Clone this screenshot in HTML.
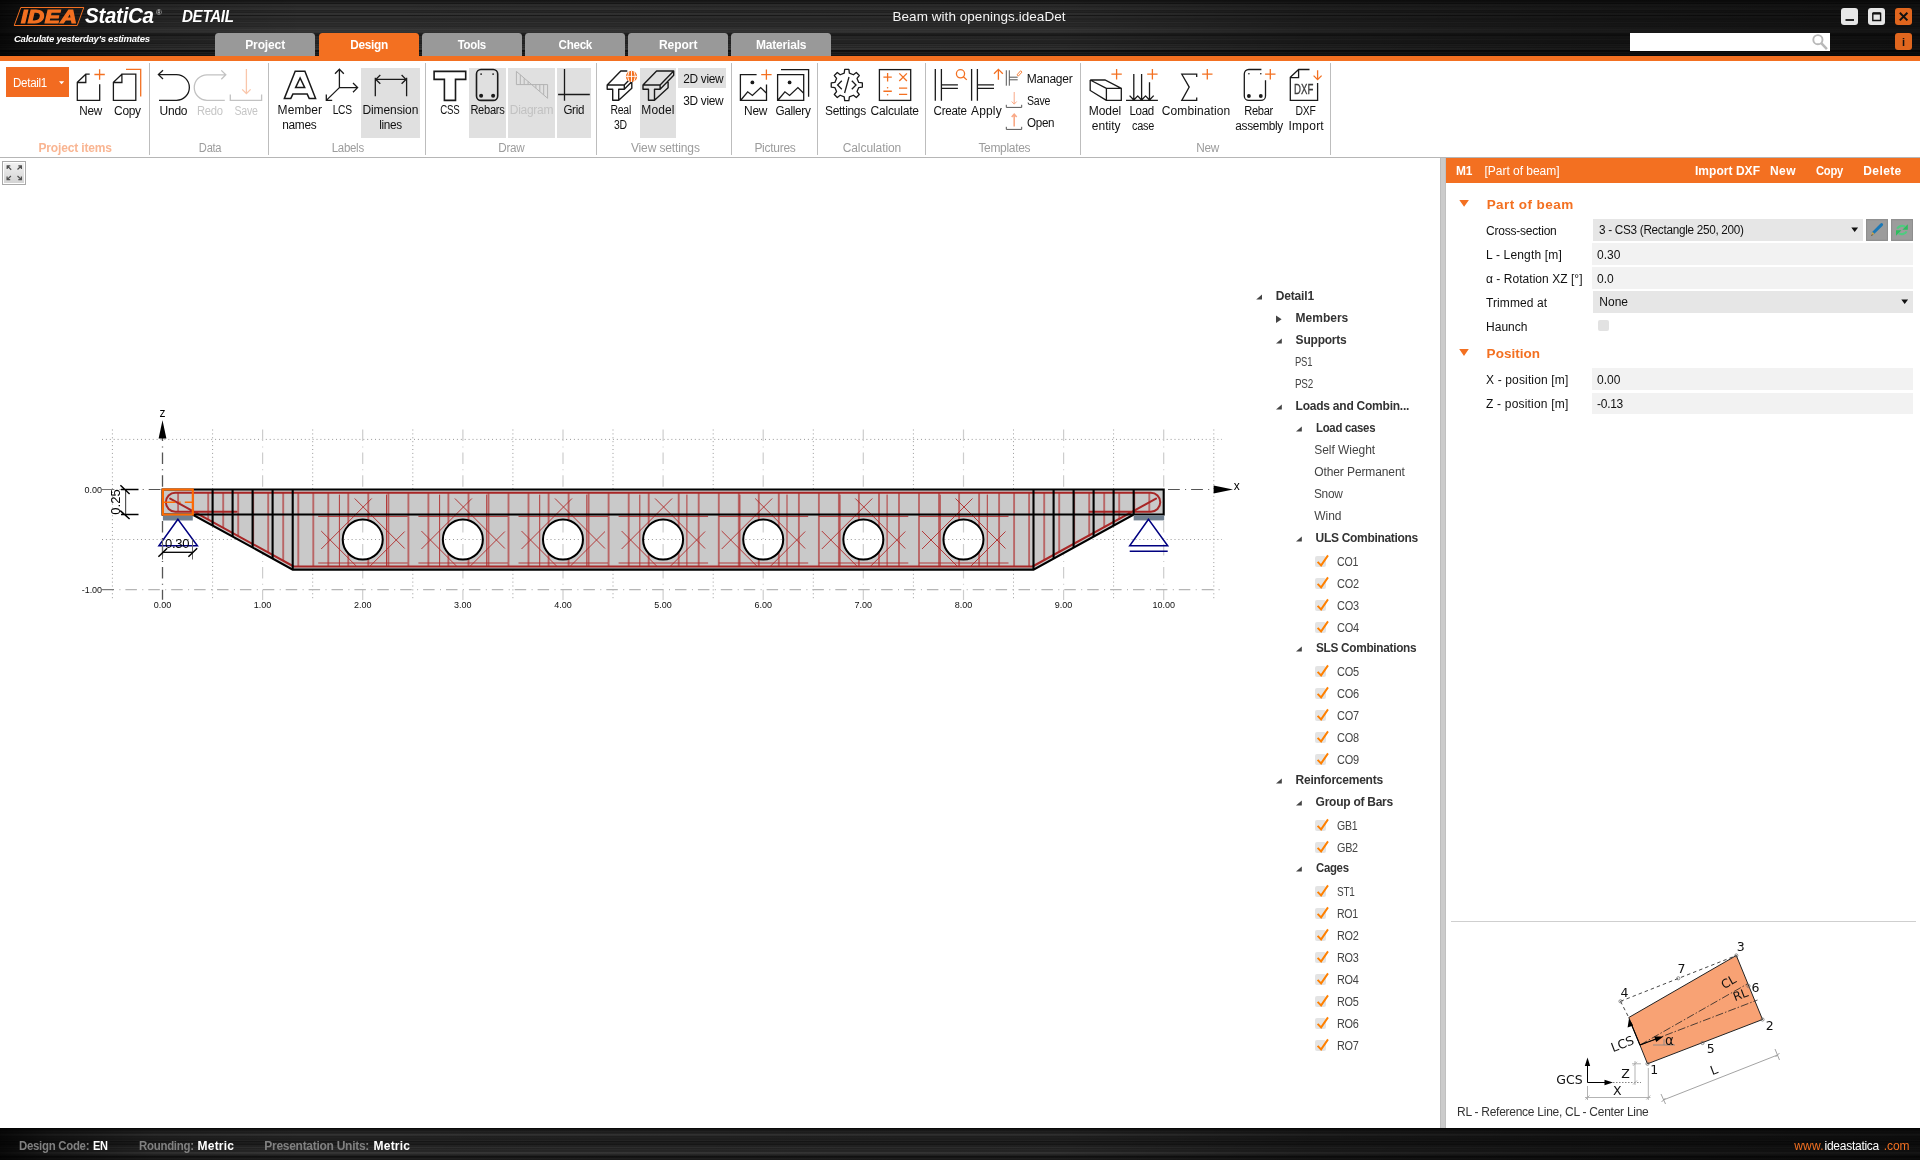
<!DOCTYPE html>
<html><head><meta charset="utf-8"><title>IDEA StatiCa Detail</title>
<style>
html,body{margin:0;padding:0;}
body{width:1920px;height:1160px;overflow:hidden;background:#fff;font-family:"Liberation Sans",sans-serif;font-size:12px;position:relative;}
.t{position:absolute;white-space:pre;}
.a{position:absolute;}
.brush{background-color:#161616;background-image:linear-gradient(90deg,rgba(0,0,0,.8) 0%,rgba(0,0,0,.5) 2.5%,rgba(0,0,0,.15) 8%,rgba(0,0,0,0) 16%,rgba(0,0,0,.08) 55%,rgba(0,0,0,.35) 68%,rgba(0,0,0,.5) 82%,rgba(0,0,0,.62) 100%),linear-gradient(180deg,#161616 0px,#161616 1px,#191919 1px,#191919 2px,#212121 2px,#212121 3px,#171717 3px,#171717 4px,#2c2c2c 4px,#2c2c2c 5px,#2d2d2d 5px,#2d2d2d 6px,#252525 6px,#252525 7px,#2c2c2c 7px,#2c2c2c 8px,#2e2e2e 8px,#2e2e2e 9px,#323232 9px,#323232 10px,#232323 10px,#232323 11px,#272727 11px,#272727 12px,#222222 12px,#222222 13px,#323232 13px,#323232 14px,#303030 14px,#303030 15px,#191919 15px,#191919 16px,#2e2e2e 16px,#2e2e2e 17px,#2e2e2e 17px,#2e2e2e 18px,#272727 18px,#272727 19px,#262626 19px,#262626 20px,#2a2a2a 20px,#2a2a2a 21px,#272727 21px,#272727 22px,#323232 22px,#323232 23px,#282828 23px,#282828 24px,#2b2b2b 24px,#2b2b2b 25px,#2c2c2c 25px,#2c2c2c 26px,#272727 26px,#272727 27px,#313131 27px,#313131 28px,#303030 28px,#303030 29px,#393939 29px,#393939 30px,#323232 30px,#323232 31px,#353535 31px,#353535 32px,#313131 32px,#313131 33px,#212121 33px,#212121 34px,#1d1d1d 34px,#1d1d1d 35px,#191919 35px,#191919 36px,#282828 36px,#282828 37px,#282828 37px,#282828 38px,#252525 38px,#252525 39px,#2e2e2e 39px,#2e2e2e 40px,#252525 40px,#252525 41px,#242424 41px,#242424 42px,#252525 42px,#252525 43px,#202020 43px,#202020 44px,#2f2f2f 44px,#2f2f2f 45px,#272727 45px,#272727 46px,#313131 46px,#313131 47px,#272727 47px,#272727 48px,#343434 48px,#343434 49px,#313131 49px,#313131 50px,#0d0d0d 50px,#0d0d0d 51px,#111111 51px,#111111 52px,#212121 52px,#212121 53px,#171717 53px,#171717 54px,#222222 54px,#222222 55px,#151515 55px,#151515 56px);}
.brush2{background-color:#161616;background-image:linear-gradient(90deg,rgba(0,0,0,.8) 0%,rgba(0,0,0,.5) 2.5%,rgba(0,0,0,.15) 8%,rgba(0,0,0,0) 16%,rgba(0,0,0,.08) 55%,rgba(0,0,0,.35) 68%,rgba(0,0,0,.5) 82%,rgba(0,0,0,.62) 100%),linear-gradient(180deg,#0a0a0a 0px,#0a0a0a 1px,#161616 1px,#161616 2px,#1a1a1a 2px,#1a1a1a 3px,#222222 3px,#222222 4px,#1e1e1e 4px,#1e1e1e 5px,#242424 5px,#242424 6px,#323232 6px,#323232 7px,#2d2d2d 7px,#2d2d2d 8px,#1f1f1f 8px,#1f1f1f 9px,#222222 9px,#222222 10px,#1f1f1f 10px,#1f1f1f 11px,#1e1e1e 11px,#1e1e1e 12px,#242424 12px,#242424 13px,#161616 13px,#161616 14px,#1f1f1f 14px,#1f1f1f 15px,#1c1c1c 15px,#1c1c1c 16px,#171717 16px,#171717 17px,#232323 17px,#232323 18px,#232323 18px,#232323 19px,#2f2f2f 19px,#2f2f2f 20px,#232323 20px,#232323 21px,#2a2a2a 21px,#2a2a2a 22px,#252525 22px,#252525 23px,#262626 23px,#262626 24px,#363636 24px,#363636 25px,#323232 25px,#323232 26px,#272727 26px,#272727 27px,#202020 27px,#202020 28px,#111111 28px,#111111 29px,#151515 29px,#151515 30px,#1f1f1f 30px,#1f1f1f 31px,#1b1b1b 31px,#1b1b1b 32px,#0f0f0f 32px,#0f0f0f 33px);}
svg{position:absolute;overflow:visible;}
.ic{fill:none;stroke:#1a1a1a;stroke-width:1.3;}
.io{fill:none;stroke:#F37021;stroke-width:1.3;}
.ig{fill:none;stroke:#bdbdbd;stroke-width:1.3;}
</style></head><body><div style="position:absolute;left:0;top:0;width:1920px;height:1160px;will-change:transform;">
<div class="a brush" style="left:0;top:0;width:1920px;height:56px;"></div>
<div class="a" style="left:0;top:56px;width:1920px;height:4.5px;background:#F37021;"></div>
<div class="a" style="left:17px;top:6.5px;width:62px;height:17px;border:1.9px solid #F37021;transform:skewX(-20deg);border-radius:1px;"></div>
<span class="t" style="left:21px;top:5px;font-size:19px;line-height:23px;font-weight:700;font-style:italic;color:#F37021;-webkit-text-stroke:1.1px #F37021;letter-spacing:0.4px;transform-origin:0 50%;transform:scaleX(1.2);">IDEA</span>
<span class="t" style="left:85.00px;top:3px;font-size:21.5px;line-height:26px;color:#fff;font-weight:700;font-style:italic;letter-spacing:-0.300px;transform-origin:0 50%;transform:scaleX(0.9546);">StatiCa</span>
<span class="t" style="left:156.00px;top:7px;font-size:8px;line-height:11px;color:#ddd;">®</span>
<span class="t" style="left:182.00px;top:7px;font-size:16px;line-height:19px;color:#fff;font-weight:700;font-style:italic;letter-spacing:-0.300px;transform-origin:0 50%;transform:scaleX(0.9438);">DETAIL</span>
<span class="t" style="left:14.00px;top:32px;font-size:9.5px;line-height:13px;color:#fff;font-weight:700;font-style:italic;letter-spacing:-0.242px;">Calculate yesterday&#x27;s estimates</span>
<span class="t" style="left:892.50px;top:8px;font-size:13.5px;line-height:17px;color:#f4f4f4;letter-spacing:0.046px;">Beam with openings.ideaDet</span>
<div class="a" style="left:215.0px;top:33px;width:100px;height:23px;background:#999999;border-radius:3.5px 3.5px 0 0;"></div>
<span class="t" style="left:245.20px;top:37px;font-size:12px;line-height:16px;color:#fff;font-weight:700;letter-spacing:-0.115px;">Project</span>
<div class="a" style="left:319.0px;top:33px;width:100px;height:23px;background:#F37021;border-radius:3.5px 3.5px 0 0;"></div>
<span class="t" style="left:349.94px;top:37px;font-size:12px;line-height:16px;color:#fff;font-weight:700;letter-spacing:-0.300px;transform-origin:50% 50%;transform:scaleX(0.9866);">Design</span>
<div class="a" style="left:422.0px;top:33px;width:100px;height:23px;background:#999999;border-radius:3.5px 3.5px 0 0;"></div>
<span class="t" style="left:457.25px;top:37px;font-size:12px;line-height:16px;color:#fff;font-weight:700;letter-spacing:-0.300px;transform-origin:50% 50%;transform:scaleX(0.9529);">Tools</span>
<div class="a" style="left:525.0px;top:33px;width:100px;height:23px;background:#999999;border-radius:3.5px 3.5px 0 0;"></div>
<span class="t" style="left:557.78px;top:37px;font-size:12px;line-height:16px;color:#fff;font-weight:700;letter-spacing:-0.300px;transform-origin:50% 50%;transform:scaleX(0.9704);">Check</span>
<div class="a" style="left:628.0px;top:33px;width:100px;height:23px;background:#999999;border-radius:3.5px 3.5px 0 0;"></div>
<span class="t" style="left:658.95px;top:37px;font-size:12px;line-height:16px;color:#fff;font-weight:700;letter-spacing:-0.034px;">Report</span>
<div class="a" style="left:731.0px;top:33px;width:100px;height:23px;background:#999999;border-radius:3.5px 3.5px 0 0;"></div>
<span class="t" style="left:755.90px;top:37px;font-size:12px;line-height:16px;color:#fff;font-weight:700;letter-spacing:-0.179px;">Materials</span>
<div class="a" style="left:1841px;top:8px;width:17px;height:17px;background:#e6e6e6;border-radius:3px;"></div>
<div class="a" style="left:1868px;top:8px;width:17px;height:17px;background:#e6e6e6;border-radius:3px;"></div>
<div class="a" style="left:1895px;top:8px;width:17px;height:17px;background:#E0661E;border-radius:3px;"></div>
<svg style="left:1841px;top:8px" width="17" height="17"><path d="M4.5 12h8.5" stroke="#111" stroke-width="1.8" fill="none"/></svg>
<svg style="left:1868px;top:8px" width="17" height="17"><path d="M4.8 5.5h7.8v7h-7.8z" stroke="#111" stroke-width="1.4" fill="none"/><path d="M4.8 5.3h7.8" stroke="#111" stroke-width="2.2"/></svg>
<svg style="left:1895px;top:8px" width="17" height="17"><path d="M4.8 4.8l7.6 7.6M12.4 4.8l-7.6 7.6" stroke="#111" stroke-width="2" fill="none"/></svg>
<div class="a" style="left:1630px;top:33px;width:200px;height:17.5px;background:#fff;"></div>
<svg style="left:1811px;top:33px" width="20" height="18"><circle cx="6.9" cy="6.7" r="4.6" stroke="#b8b8b8" stroke-width="1.9" fill="none"/><path d="M10.3 10.2l5.6 6" stroke="#b8b8b8" stroke-width="2.5"/></svg>
<div class="a" style="left:1895px;top:33px;width:17px;height:17px;background:#E0661E;border-radius:3px;"></div>
<span class="t" style="left:1902.07px;top:35px;font-size:11px;line-height:14px;color:#111;font-weight:700;">i</span>
<div class="a" style="left:149.0px;top:63px;width:1px;height:92px;background:#bdbdbd;"></div>
<div class="a" style="left:268.0px;top:63px;width:1px;height:92px;background:#bdbdbd;"></div>
<div class="a" style="left:425.0px;top:63px;width:1px;height:92px;background:#bdbdbd;"></div>
<div class="a" style="left:596.0px;top:63px;width:1px;height:92px;background:#bdbdbd;"></div>
<div class="a" style="left:731.0px;top:63px;width:1px;height:92px;background:#bdbdbd;"></div>
<div class="a" style="left:817.0px;top:63px;width:1px;height:92px;background:#bdbdbd;"></div>
<div class="a" style="left:925.0px;top:63px;width:1px;height:92px;background:#bdbdbd;"></div>
<div class="a" style="left:1080.0px;top:63px;width:1px;height:92px;background:#bdbdbd;"></div>
<div class="a" style="left:1330.0px;top:63px;width:1px;height:92px;background:#bdbdbd;"></div>
<div class="a" style="left:0;top:157px;width:1920px;height:1px;background:#b6b6b6;"></div>
<div class="a" style="left:361.2px;top:68px;width:58.80000000000001px;height:70px;background:#e0e0e0;"></div>
<div class="a" style="left:469px;top:68px;width:37px;height:70px;background:#e0e0e0;"></div>
<div class="a" style="left:508px;top:68px;width:47px;height:70px;background:#e0e0e0;"></div>
<div class="a" style="left:557px;top:68px;width:34px;height:70px;background:#e0e0e0;"></div>
<div class="a" style="left:640px;top:68px;width:36px;height:70px;background:#e0e0e0;"></div>
<div class="a" style="left:678px;top:68px;width:48px;height:20px;background:#e0e0e0;"></div>
<div class="a" style="left:6px;top:67px;width:63px;height:30px;background:#F26B21;"></div>
<span class="t" style="left:12.70px;top:75px;font-size:12px;line-height:16px;color:#fff;letter-spacing:-0.300px;transform-origin:0 50%;transform:scaleX(0.9646);">Detail1</span>
<svg style="left:0;top:0" width="100" height="100"><path d="M59 81.2h5.2l-2.6 3z" fill="#fff"/></svg>
<svg style="left:0;top:0" width="1920" height="160" fill="none" stroke="#1a1a1a" stroke-width="1.3"><path d="M89.7 74.2H85.8L77.3 82.2V100.3H99.69999999999999V84.2M77.3 82.5H85.8V74.2"/><path d="M94.39999999999999 74.5H104.8M99.6 69.3V79.7" stroke="#F37021"/><path d="M121.9 74.2L113.4 82.2V100.3H135.8V74.2H121.9V82.5H113.4"/><path d="M126 69.3H140.7V96.6" stroke="#F37021"/><path d="M158.4 74.6H176.5A12.85 12.85 0 0 1 176.5 100.3H159M163 70.2L158.4 74.6L163 79"/><path d="M225.8 74.8H207A12.75 12.75 0 0 0 207 100.3H224.8M221.3 70.4L225.8 74.8L221.3 79.2" stroke="#c2c2c2"/><path d="M246.4 69V93.4M242.2 89.4L246.4 93.6L250.6 89.4" stroke="#F9C6AB"/><path d="M230.3 94.5V100.3H261.6V94.5" stroke="#c2c2c2"/><path d="M284.4 98.4L295.2 71.2H304.9L315.6 98.4H309.2L307.2 94.1H292.9L290.8 98.4Z M300.1 78L295.6 87.6H304.7Z" stroke-width="1.5"/><path d="M339.4 87.6V69.3M335 73.8L339.4 69.3L343.8 73.8M339.4 87.6H357.6M353 83L357.6 87.6L353 92.2M339.4 87.6L326.3 100.4M326.3 94.6V100.4H332.2"/><path d="M375.3 77.7V96.2M406.6 77.7V96.2M375.8 79.4H406M380.3 75L375.8 79.4L380.3 83.8M401.6 75L406 79.4L401.6 83.8"/><path d="M434.1 71.4H465.7V79.4H455.5V100.4H444.4V79.4H434.1Z" stroke-width="1.6"/><rect x="476.5" y="69.5" width="21.2" height="30.9" rx="4.5" stroke-width="1.6"/><circle cx="481.1" cy="74.1" r="0.9" fill="#1a1a1a" stroke="none"/><circle cx="493.1" cy="74.1" r="0.9" fill="#1a1a1a" stroke="none"/><circle cx="481.1" cy="95.8" r="2" fill="#1a1a1a" stroke="none"/><circle cx="493.1" cy="95.8" r="2" fill="#1a1a1a" stroke="none"/><path d="M516.4 71.4V84.6H547.6V98.3ZM520.3 74.8V84.6M524.2 78.1V84.6M528.1 81.5V84.6M543.7 94.9V84.6M539.8 91.6V84.6M535.9 88.2V84.6" stroke="#b2b2b2" stroke-width="1"/><path d="M564.5 69.1V100.7M558.1 94.5H589.8"/><path d="M607.2 85H624.3000000000001V89.3H618.7V100.3H612.7V89.3H607.2ZM607.2 85L620.8000000000001 71H627.3000000000001M624.3000000000001 85L629.3000000000001 79.8M624.3000000000001 89.3L632.9000000000001 80.5V80M618.7 100.3L631.8000000000001 88.3V80.5" stroke-width="1.4" stroke-linejoin="round"/><circle cx="631.5" cy="76.4" r="5.6" fill="#F37021" stroke="none"/><path d="M631.5 70.8V82M625.9 76.4H637.1M629 71.5Q626.3 76.4 629 81.3M634 71.5Q636.7 76.4 634 81.3" stroke="#fff" stroke-width="0.9"/><path d="M643 85H660.1V89.3H654.5V100.3H648.5V89.3H643ZM643 85L656.6 71H673.7L660.1 85M673.7 71V75.3L660.1 89.3M654.5 100.3L668.1 87.8V80.5" stroke-width="1.4" stroke-linejoin="round"/><path d="M756.6 74.6H740.4V100.4H766.5V84.5M740.9 100L747.6999999999999 91.8L752.4 95.4L760.6999999999999 87.6L766.5 93.3"/><circle cx="752.4" cy="82.4" r="1.9" fill="#1a1a1a" stroke="none"/><path d="M761.1999999999999 74.6H771.6M766.4 69.39999999999999V79.8" stroke="#F37021"/><path d="M777.6 74.6H803.7V100.4H777.6ZM778.1 100L784.9 91.8L789.6 95.4L797.9 87.6L803.7 93.3"/><circle cx="789.6" cy="82.4" r="1.9" fill="#1a1a1a" stroke="none"/><path d="M781 69.6H808.6V96.7"/><path d="M844.23 73.07L844.71 69.44L848.89 69.44L849.37 73.07L853.42 74.75L856.32 72.52L859.28 75.48L857.05 78.38L858.73 82.43L862.36 82.91L862.36 87.09L858.73 87.57L857.05 91.62L859.28 94.52L856.32 97.48L853.42 95.25L849.37 96.93L848.89 100.56L844.71 100.56L844.23 96.93L840.18 95.25L837.28 97.48L834.32 94.52L836.55 91.62L834.87 87.57L831.24 87.09L831.24 82.91L834.87 82.43L836.55 78.38L834.32 75.48L837.28 72.52L840.18 74.75Z" stroke-linejoin="round"/><path d="M841.8 80.8L837.5999999999999 85.0L841.8 89.2M851.8 80.8L856.0 85.0L851.8 89.2M849.0 77.0L844.5999999999999 93.0"/><rect x="879.4" y="69.6" width="31.3" height="30.8"/><g stroke="#F37021"><path d="M883.4 77.2H891.8M887.6 73V81.4M899.3 73.4L906.9 81M906.9 73.4L899.3 81M883.4 91.25H891.8M899 88.1H907.2M899 94.4H907.2"/><circle cx="887.6" cy="87.8" r="0.8" fill="#F37021" stroke="none"/><circle cx="887.6" cy="94.7" r="0.8" fill="#F37021" stroke="none"/></g><path d="M935.3 69.1V100.7M941.4 69.1V100.7M941.4 84.8H957.9M941.4 88.4H957.9"/><circle cx="960.5" cy="73.8" r="4.1" stroke="#F37021"/><path d="M963.4 76.7L966.8 79.9" stroke="#F37021"/><path d="M971.6 69.1V100.7M977.4 69.1V100.7M977.4 84.8H994M977.4 88.4H994"/><path d="M998.4 69.5V79.8M994 73.8L998.4 69.4L1002.8 73.8" stroke="#F37021"/><path d="M1006.3 70.3V85.7M1009.3 70.3V85.7M1009.3 77.2H1017.7M1009.3 79.8H1017.7" stroke="#555" stroke-width="1"/><path d="M1017 74.8L1020.6 70.8L1022 72.1L1018.4 76Z" stroke="#F37021" stroke-width="0.9"/><path d="M1014.2 92V104M1011.7 101.5L1014.2 104.2L1016.7 101.5" stroke="#F9A987" stroke-width="1"/><path d="M1006.3 104.8V107.4H1021.7V104.8" stroke="#555" stroke-width="1"/><path d="M1014.2 126.4V114.5M1011.7 117L1014.2 114.3L1016.7 117" stroke="#F9A987" stroke-width="1.6"/><path d="M1006.3 126.8V129.4H1021.7V126.8" stroke="#555" stroke-width="1"/><path d="M1106.4 88.4H1121.3V100.4H1106.4ZM1090.2 80H1105L1121.3 88.4M1090.2 80L1106.4 88.4M1090.2 80V90.5L1106.4 100.4"/><path d="M1111.3999999999999 74.2H1121.8M1116.6 69.0V79.4" stroke="#F37021"/><path d="M1126 100.4H1157.9M1133.8 73.9V100M1141.6 73.9V100M1149.5 82.3V100M1129.6 95.6L1133.8 100L1138.0 95.6M1137.3999999999999 95.6L1141.6 100L1145.8 95.6M1145.3 95.6L1149.5 100L1153.7 95.6"/><path d="M1147.2 74.2H1157.6000000000001M1152.4 69.0V79.4" stroke="#F37021"/><path d="M1196.7 77V74.2H1181.8L1189.2 87.1L1181.8 100.4H1196.7V97.6"/><path d="M1202.1 74.2H1212.5M1207.3 69.0V79.4" stroke="#F37021"/><path d="M1261.4 69.5H1248.8A4.5 4.5 0 0 0 1244.3 74V95.9A4.5 4.5 0 0 0 1248.8 100.4H1261A4.5 4.5 0 0 0 1265.5 95.9V80.3"/><circle cx="1248.9" cy="73.8" r="0.8" fill="#1a1a1a" stroke="none"/><circle cx="1260.8" cy="73.8" r="0.8" fill="#1a1a1a" stroke="none"/><circle cx="1248.9" cy="96" r="1.9" fill="#1a1a1a" stroke="none"/><circle cx="1260.8" cy="96" r="1.9" fill="#1a1a1a" stroke="none"/><path d="M1265.1 74.2H1275.5M1270.3 69.0V79.4" stroke="#F37021"/><path d="M1309.5 69.5H1298.6L1290.3 77.3V100.4H1317.6V83M1290.3 77.6H1298.6V69.5"/><path d="M1317.6 70.2V79.4M1313.6 75.6L1317.6 79.6L1321.6 75.6" stroke="#F37021"/></svg>
<span class="t" style="left:1293.6px;top:80px;font-size:14.2px;line-height:18px;color:#3c3c3c;-webkit-text-stroke:0.35px #3c3c3c;transform-origin:0 50%;transform:scaleX(0.68);">DXF</span>
<span class="t" style="left:79.49px;top:103px;font-size:12px;line-height:16px;color:#111;letter-spacing:-0.300px;transform-origin:50% 50%;transform:scaleX(0.9780);">New</span>
<span class="t" style="left:113.64px;top:103px;font-size:12px;line-height:16px;color:#111;letter-spacing:-0.300px;transform-origin:50% 50%;transform:scaleX(0.9957);">Copy</span>
<span class="t" style="left:159.50px;top:103px;font-size:12px;line-height:16px;color:#111;letter-spacing:-0.229px;">Undo</span>
<span class="t" style="left:277.60px;top:102px;font-size:12px;line-height:16px;color:#111;letter-spacing:0.077px;">Member</span>
<span class="t" style="left:282.38px;top:117px;font-size:12px;line-height:16px;color:#111;letter-spacing:-0.300px;transform-origin:50% 50%;transform:scaleX(0.9905);">names</span>
<span class="t" style="left:330.83px;top:102px;font-size:12px;line-height:16px;color:#111;letter-spacing:-0.300px;transform-origin:50% 50%;transform:scaleX(0.8530);">LCS</span>
<span class="t" style="left:362.40px;top:102px;font-size:12px;line-height:16px;color:#111;letter-spacing:-0.088px;">Dimension</span>
<span class="t" style="left:379.46px;top:117px;font-size:12px;line-height:16px;color:#111;letter-spacing:-0.300px;transform-origin:50% 50%;transform:scaleX(0.9792);">lines</span>
<span class="t" style="left:438.16px;top:102px;font-size:12px;line-height:16px;color:#111;letter-spacing:-0.300px;transform-origin:50% 50%;transform:scaleX(0.8054);">CSS</span>
<span class="t" style="left:469.21px;top:102px;font-size:12px;line-height:16px;color:#111;letter-spacing:-0.300px;transform-origin:50% 50%;transform:scaleX(0.9250);">Rebars</span>
<span class="t" style="left:563.11px;top:102px;font-size:12px;line-height:16px;color:#111;letter-spacing:-0.300px;transform-origin:50% 50%;transform:scaleX(0.9645);">Grid</span>
<span class="t" style="left:609.21px;top:102px;font-size:12px;line-height:16px;color:#111;letter-spacing:-0.300px;transform-origin:50% 50%;transform:scaleX(0.8744);">Real</span>
<span class="t" style="left:613.08px;top:117px;font-size:12px;line-height:16px;color:#111;letter-spacing:-0.300px;transform-origin:50% 50%;transform:scaleX(0.8708);">3D</span>
<span class="t" style="left:641.35px;top:102px;font-size:12px;line-height:16px;color:#111;letter-spacing:0.103px;">Model</span>
<span class="t" style="left:682.86px;top:71px;font-size:12px;line-height:16px;color:#111;letter-spacing:-0.300px;transform-origin:50% 50%;transform:scaleX(0.9905);">2D view</span>
<span class="t" style="left:682.86px;top:93px;font-size:12px;line-height:16px;color:#111;letter-spacing:-0.300px;transform-origin:50% 50%;transform:scaleX(0.9905);">3D view</span>
<span class="t" style="left:744.39px;top:103px;font-size:12px;line-height:16px;color:#111;letter-spacing:-0.300px;transform-origin:50% 50%;transform:scaleX(0.9908);">New</span>
<span class="t" style="left:775.19px;top:103px;font-size:12px;line-height:16px;color:#111;letter-spacing:-0.300px;transform-origin:50% 50%;transform:scaleX(0.9775);">Gallery</span>
<span class="t" style="left:825.17px;top:103px;font-size:12px;line-height:16px;color:#111;letter-spacing:-0.300px;transform-origin:50% 50%;transform:scaleX(0.9961);">Settings</span>
<span class="t" style="left:870.60px;top:103px;font-size:12px;line-height:16px;color:#111;letter-spacing:-0.204px;">Calculate</span>
<span class="t" style="left:933.03px;top:103px;font-size:12px;line-height:16px;color:#111;letter-spacing:-0.300px;transform-origin:50% 50%;transform:scaleX(0.9672);">Create</span>
<span class="t" style="left:971.10px;top:103px;font-size:12px;line-height:16px;color:#111;letter-spacing:0.142px;">Apply</span>
<span class="t" style="left:1088.75px;top:103px;font-size:12px;line-height:16px;color:#111;letter-spacing:-0.047px;">Model</span>
<span class="t" style="left:1091.85px;top:118px;font-size:12px;line-height:16px;color:#111;">entity</span>
<span class="t" style="left:1129.20px;top:103px;font-size:12px;line-height:16px;color:#111;letter-spacing:-0.300px;transform-origin:50% 50%;transform:scaleX(0.9611);">Load</span>
<span class="t" style="left:1130.77px;top:118px;font-size:12px;line-height:16px;color:#111;letter-spacing:-0.300px;transform-origin:50% 50%;transform:scaleX(0.9076);">case</span>
<span class="t" style="left:1161.70px;top:103px;font-size:12px;line-height:16px;color:#111;letter-spacing:0.122px;">Combination</span>
<span class="t" style="left:1243.26px;top:103px;font-size:12px;line-height:16px;color:#111;letter-spacing:-0.300px;transform-origin:50% 50%;transform:scaleX(0.9242);">Rebar</span>
<span class="t" style="left:1235.21px;top:118px;font-size:12px;line-height:16px;color:#111;letter-spacing:-0.300px;transform-origin:50% 50%;transform:scaleX(0.9879);">assembly</span>
<span class="t" style="left:1293.70px;top:103px;font-size:12px;line-height:16px;color:#111;letter-spacing:-0.300px;transform-origin:50% 50%;transform:scaleX(0.8675);">DXF</span>
<span class="t" style="left:1288.50px;top:118px;font-size:12px;line-height:16px;color:#111;letter-spacing:0.237px;">Import</span>
<span class="t" style="left:195.51px;top:103px;font-size:12px;line-height:16px;color:#c6c6c6;letter-spacing:-0.300px;transform-origin:50% 50%;transform:scaleX(0.9357);">Redo</span>
<span class="t" style="left:232.97px;top:103px;font-size:12px;line-height:16px;color:#c6c6c6;letter-spacing:-0.300px;transform-origin:50% 50%;transform:scaleX(0.8806);">Save</span>
<span class="t" style="left:509.80px;top:102px;font-size:12px;line-height:16px;color:#c2c2c2;letter-spacing:-0.293px;">Diagram</span>
<span class="t" style="left:1026.70px;top:71px;font-size:12px;line-height:16px;color:#111;letter-spacing:-0.212px;">Manager</span>
<span class="t" style="left:1026.70px;top:93px;font-size:12px;line-height:16px;color:#111;letter-spacing:-0.300px;transform-origin:0 50%;transform:scaleX(0.8806);">Save</span>
<span class="t" style="left:1026.70px;top:115px;font-size:12px;line-height:16px;color:#111;letter-spacing:-0.300px;transform-origin:0 50%;transform:scaleX(0.9698);">Open</span>
<span class="t" style="left:38.45px;top:140px;font-size:12px;line-height:16px;color:#F9B592;font-weight:700;letter-spacing:-0.156px;">Project items</span>
<span class="t" style="left:197.77px;top:140px;font-size:12px;line-height:16px;color:#9c9c9c;letter-spacing:-0.300px;transform-origin:50% 50%;transform:scaleX(0.9281);">Data</span>
<span class="t" style="left:330.86px;top:140px;font-size:12px;line-height:16px;color:#9c9c9c;letter-spacing:-0.300px;transform-origin:50% 50%;transform:scaleX(0.9565);">Labels</span>
<span class="t" style="left:498.34px;top:140px;font-size:12px;line-height:16px;color:#9c9c9c;letter-spacing:-0.300px;transform-origin:50% 50%;transform:scaleX(0.9736);">Draw</span>
<span class="t" style="left:630.90px;top:140px;font-size:12px;line-height:16px;color:#9c9c9c;letter-spacing:-0.124px;">View settings</span>
<span class="t" style="left:754.40px;top:140px;font-size:12px;line-height:16px;color:#9c9c9c;letter-spacing:-0.280px;">Pictures</span>
<span class="t" style="left:842.70px;top:140px;font-size:12px;line-height:16px;color:#9c9c9c;letter-spacing:-0.077px;">Calculation</span>
<span class="t" style="left:978.40px;top:140px;font-size:12px;line-height:16px;color:#9c9c9c;letter-spacing:-0.313px;">Templates</span>
<span class="t" style="left:1195.59px;top:140px;font-size:12px;line-height:16px;color:#9c9c9c;letter-spacing:-0.300px;transform-origin:50% 50%;transform:scaleX(0.9823);">New</span>
<svg style="left:0;top:0" width="1440" height="1128"><path d="M112.4 429.5V600M212.6 429.5V600M312.7 429.5V600M412.8 429.5V600M512.9 429.5V600M613.0 429.5V600M713.2 429.5V600M813.3 429.5V600M913.4 429.5V600M1013.5 429.5V600M1113.6 429.5V600M1213.8 429.5V600M102 439.4H1222M102 539.5H1222" stroke="#9a9a9a" stroke-width="1" stroke-dasharray="1 2.9" fill="none"/><path d="M262.6 429.5V600M362.7 429.5V600M462.9 429.5V600M563.0 429.5V600M663.1 429.5V600M763.2 429.5V600M863.3 429.5V600M963.5 429.5V600M1063.6 429.5V600M1163.7 429.5V600" stroke="#cdcdcd" stroke-width="1.2" stroke-dasharray="11.5 5.4 1 5" fill="none"/><path d="M102.5 589.6H1222" stroke="#b5b5b5" stroke-width="1.1" stroke-dasharray="11.5 5.4 1 5" fill="none"/><path d="M162.5 429.5V599.8" stroke="#555" stroke-width="1.3" stroke-dasharray="11.5 5.4 1 5" fill="none"/><path d="M102.5 489.5H162.5M1168 489.5H1214" stroke="#555" stroke-width="1.2" stroke-dasharray="11.8 5.3 1 5" fill="none"/><path d="M162.5 420.3L158.6 438.6H166.4Z" fill="#000"/><path d="M1233 489.5L1213.6 485.6V493.4Z" fill="#000"/><path d="M102 489.5H114M102 589.6H114" stroke="#777" stroke-width="1"/><path d="M162.5 489.5L1163.7 489.5L1163.7 514.5L1133.7 514.5L1033.5 569.6L292.7 569.6L192.5 514.5L162.5 514.5ZM342.74 539.55A20 20 0 1 0 382.74 539.55A20 20 0 1 0 342.74 539.55ZM442.86 539.55A20 20 0 1 0 482.86 539.55A20 20 0 1 0 442.86 539.55ZM542.98 539.55A20 20 0 1 0 582.98 539.55A20 20 0 1 0 542.98 539.55ZM643.1 539.55A20 20 0 1 0 683.1 539.55A20 20 0 1 0 643.1 539.55ZM743.22 539.55A20 20 0 1 0 783.22 539.55A20 20 0 1 0 743.22 539.55ZM843.34 539.55A20 20 0 1 0 883.34 539.55A20 20 0 1 0 843.34 539.55ZM943.46 539.55A20 20 0 1 0 983.46 539.55A20 20 0 1 0 943.46 539.55Z" fill="#c9c9c9" fill-rule="evenodd" stroke="none"/><clipPath id="bc"><path d="M162.5 489.5L1163.7 489.5L1163.7 514.5L1133.7 514.5L1033.5 569.6L292.7 569.6L192.5 514.5L162.5 514.5ZM342.74 539.55A20 20 0 1 0 382.74 539.55A20 20 0 1 0 342.74 539.55ZM442.86 539.55A20 20 0 1 0 482.86 539.55A20 20 0 1 0 442.86 539.55ZM542.98 539.55A20 20 0 1 0 582.98 539.55A20 20 0 1 0 542.98 539.55ZM643.1 539.55A20 20 0 1 0 683.1 539.55A20 20 0 1 0 643.1 539.55ZM743.22 539.55A20 20 0 1 0 783.22 539.55A20 20 0 1 0 743.22 539.55ZM843.34 539.55A20 20 0 1 0 883.34 539.55A20 20 0 1 0 843.34 539.55ZM943.46 539.55A20 20 0 1 0 983.46 539.55A20 20 0 1 0 943.46 539.55Z" clip-rule="evenodd"/></clipPath><g clip-path="url(#bc)"><path d="M178.1 492.8V511.7M193.1 492.8V511.7M208.2 492.8V519.9M223.2 492.8V528.1M238.2 492.8V536.4M253.2 492.8V544.6M268.2 492.8V552.8M283.2 492.8V561.0M298.3 492.8V566.5M313.3 492.8V566.5M328.3 492.8V566.5M348.3 492.8V566.5M368.3 492.8V566.5M388.4 492.8V566.5M408.4 492.8V566.5M428.4 492.8V566.5M448.4 492.8V566.5M468.5 492.8V566.5M488.5 492.8V566.5M508.5 492.8V566.5M528.5 492.8V566.5M548.6 492.8V566.5M568.6 492.8V566.5M588.6 492.8V566.5M608.6 492.8V566.5M628.7 492.8V566.5M648.7 492.8V566.5M1149.3 492.8V511.7M1134.3 492.8V511.7M1119.2 492.8V519.9M1104.2 492.8V528.1M1089.2 492.8V536.4M1074.2 492.8V544.6M1059.2 492.8V552.8M1044.2 492.8V561.0M1029.1 492.8V566.5M1014.1 492.8V566.5M999.1 492.8V566.5M979.1 492.8V566.5M959.1 492.8V566.5M939.0 492.8V566.5M919.0 492.8V566.5M899.0 492.8V566.5M879.0 492.8V566.5M858.9 492.8V566.5M838.9 492.8V566.5M818.9 492.8V566.5M798.9 492.8V566.5M778.8 492.8V566.5M758.8 492.8V566.5M738.8 492.8V566.5M718.8 492.8V566.5M698.7 492.8V566.5M678.7 492.8V566.5" stroke="#B02A2A" stroke-opacity="0.62" stroke-width="1.9" fill="none"/><path d="M339.4 494.6V566.5M386.5 494.6V566.5M318.2 516.4H407.7M318.2 563H407.7M354.7 498.5L404.7 548.5M371.7 498.5L321.2 549.0M321.2 531.0L356.5 566.3M404.7 531.5L369.9 566.3M439.6 494.6V566.5M486.7 494.6V566.5M418.4 516.4H507.9M418.4 563H507.9M454.9 498.5L504.9 548.5M471.9 498.5L421.4 549.0M421.4 531.0L456.7 566.3M504.9 531.5L470.1 566.3M539.7 494.6V566.5M586.8 494.6V566.5M518.5 516.4H608.0M518.5 563H608.0M555.0 498.5L605.0 548.5M572.0 498.5L521.5 549.0M521.5 531.0L556.8 566.3M605.0 531.5L570.2 566.3M639.8 494.6V566.5M686.9 494.6V566.5M618.6 516.4H708.1M618.6 563H708.1M655.1 498.5L705.1 548.5M672.1 498.5L621.6 549.0M621.6 531.0L656.9 566.3M705.1 531.5L670.3 566.3M739.9 494.6V566.5M787.0 494.6V566.5M718.7 516.4H808.2M718.7 563H808.2M755.2 498.5L805.2 548.5M772.2 498.5L721.7 549.0M721.7 531.0L757.0 566.3M805.2 531.5L770.4 566.3M840.0 494.6V566.5M887.1 494.6V566.5M818.8 516.4H908.3M818.8 563H908.3M855.3 498.5L905.3 548.5M872.3 498.5L821.8 549.0M821.8 531.0L857.1 566.3M905.3 531.5L870.5 566.3M940.2 494.6V566.5M987.3 494.6V566.5M919.0 516.4H1008.5M919.0 563H1008.5M955.5 498.5L1005.5 548.5M972.5 498.5L922.0 549.0M922.0 531.0L957.3 566.3M1005.5 531.5L970.7 566.3" stroke="#B02A2A" stroke-width="1" stroke-opacity="0.9" fill="none"/><path d="M236.5 511.7H175.3A9.45 9.45 0 0 1 175.3 492.8H1150.8A9.45 9.45 0 0 1 1150.8 511.7H1089.7M170.2 498.6L293.7 566.5H1032.5L1156.0 498.6" stroke="#A82626" stroke-width="2" fill="none" stroke-linecap="round" stroke-linejoin="round"/></g><polygon points="162.5,489.5 1163.7,489.5 1163.7,514.5 1133.7,514.5 1033.5,569.6 292.7,569.6 192.5,514.5 162.5,514.5" fill="none" stroke="#000" stroke-width="2.1" stroke-linejoin="miter"/><path d="M192.536 514.525H1133.664M212.6 489.5V525.5M1113.6 489.5V525.5M232.6 489.5V536.5M1093.6 489.5V536.5M252.6 489.5V547.5M1073.6 489.5V547.5M272.6 489.5V558.5M1053.6 489.5V558.5M292.7 489.5V569.5M1033.5 489.5V569.5M1133.664 489.5V514.525" stroke="#000" stroke-width="2.1" fill="none"/><circle cx="362.74" cy="539.55" r="20" fill="none" stroke="#000" stroke-width="2"/><circle cx="462.86" cy="539.55" r="20" fill="none" stroke="#000" stroke-width="2"/><circle cx="562.98" cy="539.55" r="20" fill="none" stroke="#000" stroke-width="2"/><circle cx="663.1" cy="539.55" r="20" fill="none" stroke="#000" stroke-width="2"/><circle cx="763.22" cy="539.55" r="20" fill="none" stroke="#000" stroke-width="2"/><circle cx="863.34" cy="539.55" r="20" fill="none" stroke="#000" stroke-width="2"/><circle cx="963.46" cy="539.55" r="20" fill="none" stroke="#000" stroke-width="2"/><rect x="162.9" y="489.5" width="29.9" height="25.1" fill="none" stroke="#FF6A00" stroke-width="2.1"/><path d="M164 502.2H175M179.2 502.2H180.6M184.8 502.2H192" stroke="#FF6A00" stroke-width="1.6" fill="none"/><rect x="162.9" y="515.8" width="29.9" height="4.7" fill="#708090"/><rect x="1133.664" y="515.4" width="30.5" height="5" fill="#708090"/><path d="M177.9 519.3L158.9 545.8H197.4Z" fill="none" stroke="#000080" stroke-width="1.5" stroke-linejoin="miter"/><path d="M1148.5 519.3L1129.7 545.7H1167.7ZM1129.7 551.3H1167.7" fill="none" stroke="#000080" stroke-width="1.5"/><path d="M125.6 489.5V514.6" stroke="#555" stroke-width="1.2" fill="none"/><path d="M121 489.5H138.5M121 514.6H138.5M120.4 485.3L129.6 494M120.2 510.6L129.6 519" stroke="#000" stroke-width="1.5" fill="none"/><path d="M162.5 552.3H192.5" stroke="#000" stroke-width="1.3" fill="none"/><path d="M162.5 539.5V559.5M192.5 539.5V559.5" stroke="#666" stroke-width="1" fill="none"/><path d="M158.4 556.8L167.2 548.2M188.4 556.8L197.2 548.2" stroke="#000" stroke-width="1.5" fill="none"/></svg>
<span class="t" style="left:159.50px;top:405px;font-size:12px;line-height:16px;color:#000;">z</span>
<span class="t" style="left:1233.80px;top:478px;font-size:12px;line-height:16px;color:#000;">x</span>
<span class="t" style="left:84.60px;top:484px;font-size:9px;line-height:12px;color:#111;letter-spacing:-0.044px;">0.00</span>
<span class="t" style="left:81.80px;top:584px;font-size:9px;line-height:12px;color:#111;letter-spacing:-0.079px;">-1.00</span>
<span class="t" style="left:153.73px;top:599px;font-size:9px;line-height:12px;color:#111;">0.00</span>
<span class="t" style="left:253.85px;top:599px;font-size:9px;line-height:12px;color:#111;">1.00</span>
<span class="t" style="left:353.97px;top:599px;font-size:9px;line-height:12px;color:#111;">2.00</span>
<span class="t" style="left:454.09px;top:599px;font-size:9px;line-height:12px;color:#111;">3.00</span>
<span class="t" style="left:554.21px;top:599px;font-size:9px;line-height:12px;color:#111;">4.00</span>
<span class="t" style="left:654.33px;top:599px;font-size:9px;line-height:12px;color:#111;">5.00</span>
<span class="t" style="left:754.45px;top:599px;font-size:9px;line-height:12px;color:#111;">6.00</span>
<span class="t" style="left:854.57px;top:599px;font-size:9px;line-height:12px;color:#111;">7.00</span>
<span class="t" style="left:954.69px;top:599px;font-size:9px;line-height:12px;color:#111;">8.00</span>
<span class="t" style="left:1054.81px;top:599px;font-size:9px;line-height:12px;color:#111;">9.00</span>
<span class="t" style="left:1152.43px;top:599px;font-size:9px;line-height:12px;color:#111;">10.00</span>
<span class="t" style="left:165.00px;top:535px;font-size:13px;line-height:17px;color:#000;letter-spacing:-0.237px;">0.30</span>
<span class="t" style="left:119.60px;top:502.00px;font-size:13px;line-height:17px;color:#000;transform-origin:0 0;transform:rotate(-90deg) translate(-12.66px,-13.00px);">0.25</span>
<div class="a" style="left:2px;top:161px;width:24px;height:24px;box-sizing:border-box;border:1px solid #a8a8a8;background:#fff;"></div>
<div class="a" style="left:4px;top:163px;width:20px;height:20px;background:linear-gradient(#f1f1f1,#d4d4d4);"></div>
<svg style="left:2px;top:161px" width="24" height="24" stroke="#505050" stroke-width="1.25" fill="none"><path d="M9.2 8.7L5.2 4.9M5.2 7.9V4.9H8.3M15.5 8.5L19.4 4.8M16.3 4.8H19.4V7.9M8.9 15L5.1 18.6M5.1 15.6V18.6H8.2M15.5 15L19.4 18.6M16.3 18.6H19.4V15.6"/></svg>
<span class="t" style="left:1275.80px;top:288px;font-size:12px;line-height:16px;color:#333;font-weight:700;letter-spacing:-0.177px;">Detail1</span>
<span class="t" style="left:1295.60px;top:310px;font-size:12px;line-height:16px;color:#333;font-weight:700;">Members</span>
<span class="t" style="left:1295.60px;top:332px;font-size:12px;line-height:16px;color:#333;font-weight:700;letter-spacing:-0.210px;">Supports</span>
<span class="t" style="left:1294.80px;top:354px;font-size:12px;line-height:16px;color:#444;letter-spacing:-0.300px;transform-origin:0 50%;transform:scaleX(0.7878);">PS1</span>
<span class="t" style="left:1294.80px;top:376px;font-size:12px;line-height:16px;color:#444;letter-spacing:-0.300px;transform-origin:0 50%;transform:scaleX(0.8240);">PS2</span>
<span class="t" style="left:1295.60px;top:398px;font-size:12px;line-height:16px;color:#333;font-weight:700;letter-spacing:-0.234px;">Loads and Combin...</span>
<span class="t" style="left:1315.60px;top:420px;font-size:12px;line-height:16px;color:#333;font-weight:700;letter-spacing:-0.300px;transform-origin:0 50%;transform:scaleX(0.9493);">Load cases</span>
<span class="t" style="left:1314.30px;top:442px;font-size:12px;line-height:16px;color:#444;letter-spacing:-0.056px;">Self Wieght</span>
<span class="t" style="left:1314.30px;top:464px;font-size:12px;line-height:16px;color:#444;letter-spacing:-0.110px;">Other Permanent</span>
<span class="t" style="left:1314.30px;top:486px;font-size:12px;line-height:16px;color:#444;letter-spacing:-0.300px;transform-origin:0 50%;transform:scaleX(0.9886);">Snow</span>
<span class="t" style="left:1314.30px;top:508px;font-size:12px;line-height:16px;color:#444;letter-spacing:-0.081px;">Wind</span>
<span class="t" style="left:1315.60px;top:530px;font-size:12px;line-height:16px;color:#333;font-weight:700;letter-spacing:-0.316px;">ULS Combinations</span>
<div class="a" style="left:1315px;top:556.2px;width:10.5px;height:10.5px;background:#e4e4e4;border-radius:2px;"></div>
<span class="t" style="left:1337.10px;top:554px;font-size:12px;line-height:16px;color:#444;letter-spacing:-0.300px;transform-origin:0 50%;transform:scaleX(0.8843);">CO1</span>
<div class="a" style="left:1315px;top:578.2px;width:10.5px;height:10.5px;background:#e4e4e4;border-radius:2px;"></div>
<span class="t" style="left:1337.10px;top:576px;font-size:12px;line-height:16px;color:#444;letter-spacing:-0.300px;transform-origin:0 50%;transform:scaleX(0.9133);">CO2</span>
<div class="a" style="left:1315px;top:600.2px;width:10.5px;height:10.5px;background:#e4e4e4;border-radius:2px;"></div>
<span class="t" style="left:1337.10px;top:598px;font-size:12px;line-height:16px;color:#444;letter-spacing:-0.300px;transform-origin:0 50%;transform:scaleX(0.9133);">CO3</span>
<div class="a" style="left:1315px;top:622.2px;width:10.5px;height:10.5px;background:#e4e4e4;border-radius:2px;"></div>
<span class="t" style="left:1337.10px;top:620px;font-size:12px;line-height:16px;color:#444;letter-spacing:-0.300px;transform-origin:0 50%;transform:scaleX(0.9133);">CO4</span>
<span class="t" style="left:1315.60px;top:640px;font-size:12px;line-height:16px;color:#333;font-weight:700;letter-spacing:-0.300px;transform-origin:0 50%;transform:scaleX(0.9846);">SLS Combinations</span>
<div class="a" style="left:1315px;top:666.2px;width:10.5px;height:10.5px;background:#e4e4e4;border-radius:2px;"></div>
<span class="t" style="left:1337.10px;top:664px;font-size:12px;line-height:16px;color:#444;letter-spacing:-0.300px;transform-origin:0 50%;transform:scaleX(0.9133);">CO5</span>
<div class="a" style="left:1315px;top:688.2px;width:10.5px;height:10.5px;background:#e4e4e4;border-radius:2px;"></div>
<span class="t" style="left:1337.10px;top:686px;font-size:12px;line-height:16px;color:#444;letter-spacing:-0.300px;transform-origin:0 50%;transform:scaleX(0.9133);">CO6</span>
<div class="a" style="left:1315px;top:710.2px;width:10.5px;height:10.5px;background:#e4e4e4;border-radius:2px;"></div>
<span class="t" style="left:1337.10px;top:708px;font-size:12px;line-height:16px;color:#444;letter-spacing:-0.300px;transform-origin:0 50%;transform:scaleX(0.9133);">CO7</span>
<div class="a" style="left:1315px;top:732.2px;width:10.5px;height:10.5px;background:#e4e4e4;border-radius:2px;"></div>
<span class="t" style="left:1337.10px;top:730px;font-size:12px;line-height:16px;color:#444;letter-spacing:-0.300px;transform-origin:0 50%;transform:scaleX(0.9133);">CO8</span>
<div class="a" style="left:1315px;top:754.2px;width:10.5px;height:10.5px;background:#e4e4e4;border-radius:2px;"></div>
<span class="t" style="left:1337.10px;top:752px;font-size:12px;line-height:16px;color:#444;letter-spacing:-0.300px;transform-origin:0 50%;transform:scaleX(0.9133);">CO9</span>
<span class="t" style="left:1295.60px;top:772px;font-size:12px;line-height:16px;color:#333;font-weight:700;letter-spacing:-0.246px;">Reinforcements</span>
<span class="t" style="left:1315.60px;top:794px;font-size:12px;line-height:16px;color:#333;font-weight:700;letter-spacing:-0.256px;">Group of Bars</span>
<div class="a" style="left:1315px;top:820.2px;width:10.5px;height:10.5px;background:#e4e4e4;border-radius:2px;"></div>
<span class="t" style="left:1337.10px;top:818px;font-size:12px;line-height:16px;color:#444;letter-spacing:-0.300px;transform-origin:0 50%;transform:scaleX(0.8755);">GB1</span>
<div class="a" style="left:1315px;top:842.2px;width:10.5px;height:10.5px;background:#e4e4e4;border-radius:2px;"></div>
<span class="t" style="left:1337.10px;top:840px;font-size:12px;line-height:16px;color:#444;letter-spacing:-0.300px;transform-origin:0 50%;transform:scaleX(0.9011);">GB2</span>
<span class="t" style="left:1315.60px;top:860px;font-size:12px;line-height:16px;color:#333;font-weight:700;letter-spacing:-0.300px;transform-origin:0 50%;transform:scaleX(0.9474);">Cages</span>
<div class="a" style="left:1315px;top:886.2px;width:10.5px;height:10.5px;background:#e4e4e4;border-radius:2px;"></div>
<span class="t" style="left:1337.10px;top:884px;font-size:12px;line-height:16px;color:#444;letter-spacing:-0.300px;transform-origin:0 50%;transform:scaleX(0.8312);">ST1</span>
<div class="a" style="left:1315px;top:908.2px;width:10.5px;height:10.5px;background:#e4e4e4;border-radius:2px;"></div>
<span class="t" style="left:1337.10px;top:906px;font-size:12px;line-height:16px;color:#444;letter-spacing:-0.300px;transform-origin:0 50%;transform:scaleX(0.8801);">RO1</span>
<div class="a" style="left:1315px;top:930.2px;width:10.5px;height:10.5px;background:#e4e4e4;border-radius:2px;"></div>
<span class="t" style="left:1337.10px;top:928px;font-size:12px;line-height:16px;color:#444;letter-spacing:-0.300px;transform-origin:0 50%;transform:scaleX(0.9092);">RO2</span>
<div class="a" style="left:1315px;top:952.2px;width:10.5px;height:10.5px;background:#e4e4e4;border-radius:2px;"></div>
<span class="t" style="left:1337.10px;top:950px;font-size:12px;line-height:16px;color:#444;letter-spacing:-0.300px;transform-origin:0 50%;transform:scaleX(0.9092);">RO3</span>
<div class="a" style="left:1315px;top:974.2px;width:10.5px;height:10.5px;background:#e4e4e4;border-radius:2px;"></div>
<span class="t" style="left:1337.10px;top:972px;font-size:12px;line-height:16px;color:#444;letter-spacing:-0.300px;transform-origin:0 50%;transform:scaleX(0.9092);">RO4</span>
<div class="a" style="left:1315px;top:996.2px;width:10.5px;height:10.5px;background:#e4e4e4;border-radius:2px;"></div>
<span class="t" style="left:1337.10px;top:994px;font-size:12px;line-height:16px;color:#444;letter-spacing:-0.300px;transform-origin:0 50%;transform:scaleX(0.9092);">RO5</span>
<div class="a" style="left:1315px;top:1018.2px;width:10.5px;height:10.5px;background:#e4e4e4;border-radius:2px;"></div>
<span class="t" style="left:1337.10px;top:1016px;font-size:12px;line-height:16px;color:#444;letter-spacing:-0.300px;transform-origin:0 50%;transform:scaleX(0.9092);">RO6</span>
<div class="a" style="left:1315px;top:1040.2px;width:10.5px;height:10.5px;background:#e4e4e4;border-radius:2px;"></div>
<span class="t" style="left:1337.10px;top:1038px;font-size:12px;line-height:16px;color:#444;letter-spacing:-0.300px;transform-origin:0 50%;transform:scaleX(0.9092);">RO7</span>
<svg style="left:0;top:0" width="1440" height="1128"><path d="M1262.0 294.4V299.6H1256.2Z" fill="#444"/><path d="M1276.0 315.4L1281.6 319.2L1276.0 323.0Z" fill="#444"/><path d="M1281.8 338.4V343.6H1276.0Z" fill="#444"/><path d="M1281.8 404.4V409.6H1276.0Z" fill="#444"/><path d="M1301.8 426.4V431.6H1296.0Z" fill="#444"/><path d="M1301.8 536.4V541.6H1296.0Z" fill="#444"/><path d="M1317.6 561.9L1321.1 565.4L1328.0 555.4" fill="none" stroke="#FF8000" stroke-width="1.9" stroke-linejoin="miter"/><path d="M1317.6 583.9L1321.1 587.4L1328.0 577.4" fill="none" stroke="#FF8000" stroke-width="1.9" stroke-linejoin="miter"/><path d="M1317.6 605.9L1321.1 609.4L1328.0 599.4" fill="none" stroke="#FF8000" stroke-width="1.9" stroke-linejoin="miter"/><path d="M1317.6 627.9L1321.1 631.4L1328.0 621.4" fill="none" stroke="#FF8000" stroke-width="1.9" stroke-linejoin="miter"/><path d="M1301.8 646.4V651.6H1296.0Z" fill="#444"/><path d="M1317.6 671.9L1321.1 675.4L1328.0 665.4" fill="none" stroke="#FF8000" stroke-width="1.9" stroke-linejoin="miter"/><path d="M1317.6 693.9L1321.1 697.4L1328.0 687.4" fill="none" stroke="#FF8000" stroke-width="1.9" stroke-linejoin="miter"/><path d="M1317.6 715.9L1321.1 719.4L1328.0 709.4" fill="none" stroke="#FF8000" stroke-width="1.9" stroke-linejoin="miter"/><path d="M1317.6 737.9L1321.1 741.4L1328.0 731.4" fill="none" stroke="#FF8000" stroke-width="1.9" stroke-linejoin="miter"/><path d="M1317.6 759.9L1321.1 763.4L1328.0 753.4" fill="none" stroke="#FF8000" stroke-width="1.9" stroke-linejoin="miter"/><path d="M1281.8 778.4V783.6H1276.0Z" fill="#444"/><path d="M1301.8 800.4V805.6H1296.0Z" fill="#444"/><path d="M1317.6 825.9L1321.1 829.4L1328.0 819.4" fill="none" stroke="#FF8000" stroke-width="1.9" stroke-linejoin="miter"/><path d="M1317.6 847.9L1321.1 851.4L1328.0 841.4" fill="none" stroke="#FF8000" stroke-width="1.9" stroke-linejoin="miter"/><path d="M1301.8 866.4V871.6H1296.0Z" fill="#444"/><path d="M1317.6 891.9L1321.1 895.4L1328.0 885.4" fill="none" stroke="#FF8000" stroke-width="1.9" stroke-linejoin="miter"/><path d="M1317.6 913.9L1321.1 917.4L1328.0 907.4" fill="none" stroke="#FF8000" stroke-width="1.9" stroke-linejoin="miter"/><path d="M1317.6 935.9L1321.1 939.4L1328.0 929.4" fill="none" stroke="#FF8000" stroke-width="1.9" stroke-linejoin="miter"/><path d="M1317.6 957.9L1321.1 961.4L1328.0 951.4" fill="none" stroke="#FF8000" stroke-width="1.9" stroke-linejoin="miter"/><path d="M1317.6 979.9L1321.1 983.4L1328.0 973.4" fill="none" stroke="#FF8000" stroke-width="1.9" stroke-linejoin="miter"/><path d="M1317.6 1001.9L1321.1 1005.4L1328.0 995.4" fill="none" stroke="#FF8000" stroke-width="1.9" stroke-linejoin="miter"/><path d="M1317.6 1023.9L1321.1 1027.4L1328.0 1017.4" fill="none" stroke="#FF8000" stroke-width="1.9" stroke-linejoin="miter"/><path d="M1317.6 1045.9L1321.1 1049.4L1328.0 1039.4" fill="none" stroke="#FF8000" stroke-width="1.9" stroke-linejoin="miter"/></svg>
<div class="a" style="left:1440px;top:158px;width:6px;height:970px;background:#cbcbcb;border-left:1px solid #bcbcbc;border-right:1px solid #c0c0c0;box-sizing:border-box;"></div>
<div class="a" style="left:1446px;top:157.5px;width:474px;height:25px;background:#F37021;"></div>
<span class="t" style="left:1456.20px;top:163px;font-size:12px;line-height:16px;color:#fff;font-weight:700;letter-spacing:-0.300px;transform-origin:0 50%;transform:scaleX(0.9956);">M1</span>
<span class="t" style="left:1484.50px;top:163px;font-size:12px;line-height:16px;color:#fff;letter-spacing:-0.029px;">[Part of beam]</span>
<span class="t" style="left:1695.00px;top:163px;font-size:12px;line-height:16px;color:#fff;font-weight:700;letter-spacing:0.036px;">Import DXF</span>
<span class="t" style="left:1770.00px;top:163px;font-size:12px;line-height:16px;color:#fff;font-weight:700;letter-spacing:0.406px;">New</span>
<span class="t" style="left:1815.80px;top:163px;font-size:12px;line-height:16px;color:#fff;font-weight:700;letter-spacing:-0.300px;transform-origin:0 50%;transform:scaleX(0.9347);">Copy</span>
<span class="t" style="left:1863.30px;top:163px;font-size:12px;line-height:16px;color:#fff;font-weight:700;letter-spacing:0.394px;">Delete</span>
<span class="t" style="left:1486.70px;top:196px;font-size:13.5px;line-height:17px;color:#F37021;font-weight:700;letter-spacing:0.429px;">Part of beam</span>
<span class="t" style="left:1486.60px;top:345px;font-size:13.5px;line-height:17px;color:#F37021;font-weight:700;letter-spacing:0.036px;">Position</span>
<span class="t" style="left:1486.00px;top:223px;font-size:12px;line-height:16px;color:#111;letter-spacing:-0.213px;">Cross-section</span>
<span class="t" style="left:1486.00px;top:247px;font-size:12px;line-height:16px;color:#111;letter-spacing:0.170px;">L - Length [m]</span>
<span class="t" style="left:1486.00px;top:271px;font-size:12px;line-height:16px;color:#111;letter-spacing:0.041px;">α - Rotation XZ [°]</span>
<span class="t" style="left:1486.00px;top:295px;font-size:12px;line-height:16px;color:#111;letter-spacing:0.085px;">Trimmed at</span>
<span class="t" style="left:1486.00px;top:319px;font-size:12px;line-height:16px;color:#111;letter-spacing:0.025px;">Haunch</span>
<span class="t" style="left:1486.00px;top:372px;font-size:12px;line-height:16px;color:#111;letter-spacing:0.151px;">X - position [m]</span>
<span class="t" style="left:1486.00px;top:396px;font-size:12px;line-height:16px;color:#111;letter-spacing:0.196px;">Z - position [m]</span>
<div class="a" style="left:1593px;top:219.3px;width:269.5px;height:21.5px;background:#e6e6e6;"></div>
<div class="a" style="left:1866.3px;top:219.3px;width:21.5px;height:21.5px;background:#9c9c9c;"></div>
<div class="a" style="left:1891.3px;top:219.3px;width:21.700000000000045px;height:21.5px;background:#9c9c9c;"></div>
<div class="a" style="left:1592px;top:243px;width:321px;height:21.5px;background:#f2f2f2;"></div>
<div class="a" style="left:1592px;top:267px;width:321px;height:21.600000000000023px;background:#f2f2f2;"></div>
<div class="a" style="left:1593px;top:291.3px;width:320px;height:21.30000000000001px;background:#e6e6e6;"></div>
<div class="a" style="left:1592px;top:368.3px;width:321px;height:21.30000000000001px;background:#f2f2f2;"></div>
<div class="a" style="left:1592px;top:392.5px;width:321px;height:21.30000000000001px;background:#f2f2f2;"></div>
<div class="a" style="left:1598px;top:320.3px;width:10.8px;height:10.4px;background:#e2e2e2;border-radius:2px;"></div>
<svg style="left:0;top:0" width="1920" height="500"><path d="M1459.3 200h9.6l-4.8 6.8zM1459.2 349.1h9.6l-4.8 6.8z" fill="#F37021"/><path d="M1851.3 227.5h6.8l-3.4 4.6zM1901.3 299.4h6.8l-3.4 4.6z" fill="#111"/></svg>
<span class="t" style="left:1598.80px;top:222px;font-size:12px;line-height:16px;color:#111;letter-spacing:-0.300px;transform-origin:0 50%;transform:scaleX(0.9798);">3 - CS3 (Rectangle 250, 200)</span>
<span class="t" style="left:1597.00px;top:247px;font-size:12px;line-height:16px;color:#111;letter-spacing:0.047px;">0.30</span>
<span class="t" style="left:1597.00px;top:271px;font-size:12px;line-height:16px;color:#111;letter-spacing:0.056px;">0.0</span>
<span class="t" style="left:1599.30px;top:294px;font-size:12px;line-height:16px;color:#111;">None</span>
<span class="t" style="left:1597.00px;top:372px;font-size:12px;line-height:16px;color:#111;letter-spacing:0.047px;">0.00</span>
<span class="t" style="left:1597.00px;top:396px;font-size:12px;line-height:16px;color:#111;letter-spacing:-0.265px;">-0.13</span>
<svg style="left:0;top:0" width="1920" height="300"><rect x="1866.6" y="219.7" width="20.8" height="20.6" fill="none" stroke="#8e8e8e" stroke-width="1"/><rect x="1891.6" y="219.7" width="20.9" height="20.6" fill="none" stroke="#8e8e8e" stroke-width="1"/><path d="M1873.4 232.8L1881.6 224.6" stroke="#1B78B6" stroke-width="3" stroke-linecap="round"/><path d="M1872.4 231.8L1874.6 234L1871.2 235.8Z" fill="#c9a24a"/><path d="M1871.1 235.9L1872 234.2L1872.9 235Z" fill="#333"/><path d="M1897.2 228.6A5.2 4.2 0 0 1 1905 226.6" fill="none" stroke="#4fcb80" stroke-width="2.2"/><path d="M1907.8 224.2V229.8H1902.4Z" fill="#2dbd5e"/><path d="M1906.6 231.4A5.2 4.2 0 0 1 1898.8 233.4" fill="none" stroke="#4fcb80" stroke-width="2.2"/><path d="M1896 235.8V230.2H1901.4Z" fill="#2dbd5e"/></svg>
<div class="a" style="left:1451px;top:921px;width:465px;height:1px;background:#cfcfcf;"></div>
<svg style="left:0;top:0" width="1920" height="1128"><path d="M1647.5 1063.8L1762.5 1019.5L1736.3 955.5L1628.8 1017.5Z" fill="#F8A274" stroke="#222" stroke-width="1"/><path d="M1620.5 1001.3L1736.3 955.5M1620.5 1001.3L1628.8 1017.5" fill="none" stroke="#333" stroke-width="0.9" stroke-dasharray="3.5 3"/><path d="M1640 1045L1747.5 983.8M1640 1045L1757.5 1000" fill="none" stroke="#222" stroke-width="0.8" stroke-dasharray="8 2 1.5 2"/><path d="M1640 1045L1660 1037.6M1640 1045L1630.6 1022.6" stroke="#000" stroke-width="1.1" fill="none"/><path d="M1663.5 1036.6L1654.2 1036.6L1656.2 1042Z M1629 1018.6L1627.6 1027.6L1633.2 1025.4Z" fill="#000"/><path d="M1653 1045H1675M1664 1045V1039" stroke="#888" stroke-width="0.9" fill="none"/><path d="M1587.5 1082.5V1064M1587.5 1082.5H1606" stroke="#000" stroke-width="1" fill="none"/><path d="M1587.5 1057.5L1584.8 1066H1590.2ZM1613 1082.5L1604.5 1079.8V1085.2Z" fill="#000"/><path d="M1613 1082.5H1641" stroke="#666" stroke-width="0.8" stroke-dasharray="1.5 1.5" fill="none"/><path d="M1587.5 1086V1100M1648.3 1068V1100M1585 1097.5H1650.5M1585.5 1099.5L1589.5 1095.5M1646.3 1099.5L1650.3 1095.5M1632 1063.8H1641M1635 1061V1085M1633 1065.8L1637 1061.8M1633 1084.5L1637 1080.5" stroke="#aaa" stroke-width="0.9" fill="none"/><path d="M1663.3 1100L1777.5 1055M1661 1094L1665.5 1104M1775 1049L1779.5 1060M1661.5 1102L1665.5 1098M1775.5 1057L1779.5 1053" stroke="#999" stroke-width="0.9" fill="none"/><circle cx="1647.5" cy="1063.8" r="1.6" fill="none" stroke="#666" stroke-width="0.7"/><circle cx="1762.5" cy="1019.5" r="1.6" fill="none" stroke="#666" stroke-width="0.7"/><circle cx="1736.3" cy="955.5" r="1.6" fill="none" stroke="#666" stroke-width="0.7"/><circle cx="1620.5" cy="1001.3" r="1.6" fill="none" stroke="#666" stroke-width="0.7"/><circle cx="1702.5" cy="1043" r="1.6" fill="none" stroke="#666" stroke-width="0.7"/><circle cx="1748.5" cy="986" r="1.6" fill="none" stroke="#666" stroke-width="0.7"/><circle cx="1678.3" cy="978.3" r="1.6" fill="none" stroke="#666" stroke-width="0.7"/><text x="1740.8" y="951.2" font-size="12.5" style="font-family:'DejaVu Sans',sans-serif;" fill="#111" text-anchor="middle">3</text><text x="1681.5" y="973.2" font-size="12.5" style="font-family:'DejaVu Sans',sans-serif;" fill="#111" text-anchor="middle">7</text><text x="1624.5" y="996.5" font-size="12.5" style="font-family:'DejaVu Sans',sans-serif;" fill="#111" text-anchor="middle">4</text><text x="1755.5" y="991.5" font-size="12.5" style="font-family:'DejaVu Sans',sans-serif;" fill="#111" text-anchor="middle">6</text><text x="1769.7" y="1030" font-size="12.5" style="font-family:'DejaVu Sans',sans-serif;" fill="#111" text-anchor="middle">2</text><text x="1710.7" y="1052.8" font-size="12.5" style="font-family:'DejaVu Sans',sans-serif;" fill="#111" text-anchor="middle">5</text><text x="1654.3" y="1074" font-size="12.5" style="font-family:'DejaVu Sans',sans-serif;" fill="#111" text-anchor="middle">1</text><text x="1730.5" y="985.5" font-size="12" style="font-family:'DejaVu Sans',sans-serif;" fill="#111" text-anchor="middle" transform="rotate(-29 1730.5 985.5)">CL</text><text x="1742" y="998.5" font-size="12" style="font-family:'DejaVu Sans',sans-serif;" fill="#111" text-anchor="middle" transform="rotate(-21 1742 998.5)">RL</text><text x="1624" y="1048" font-size="12.5" style="font-family:'DejaVu Sans',sans-serif;" fill="#111" text-anchor="middle" transform="rotate(-21 1624 1048)">LCS</text><text x="1715.5" y="1074" font-size="12.5" style="font-family:'DejaVu Sans',sans-serif;" fill="#111" text-anchor="middle" transform="rotate(-21 1715.5 1074)">L</text><text x="1669.5" y="1045" font-size="13.5" style="font-family:'DejaVu Sans',sans-serif;" fill="#111" text-anchor="middle">α</text><text x="1569.5" y="1084" font-size="12.5" style="font-family:'DejaVu Sans',sans-serif;" fill="#111" text-anchor="middle">GCS</text><text x="1625.5" y="1077.5" font-size="12.5" style="font-family:'DejaVu Sans',sans-serif;" fill="#111" text-anchor="middle">Z</text><text x="1617.2" y="1094.5" font-size="12.5" style="font-family:'DejaVu Sans',sans-serif;" fill="#111" text-anchor="middle">X</text></svg>
<span class="t" style="left:1457.00px;top:1104px;font-size:12px;line-height:16px;color:#333;letter-spacing:-0.262px;">RL - Reference Line, CL - Center Line</span>
<div class="a brush2" style="left:0;top:1127.5px;width:1920px;height:33px;"></div>
<span class="t" style="left:18.50px;top:1138px;font-size:12px;line-height:16px;color:#808080;font-weight:700;letter-spacing:-0.300px;transform-origin:0 50%;transform:scaleX(0.9521);">Design Code:</span>
<span class="t" style="left:93.00px;top:1138px;font-size:12px;line-height:16px;color:#fff;font-weight:700;letter-spacing:-0.300px;transform-origin:0 50%;transform:scaleX(0.9162);">EN</span>
<span class="t" style="left:138.50px;top:1138px;font-size:12px;line-height:16px;color:#808080;font-weight:700;letter-spacing:-0.300px;transform-origin:0 50%;transform:scaleX(0.9551);">Rounding:</span>
<span class="t" style="left:197.50px;top:1138px;font-size:12px;line-height:16px;color:#fff;font-weight:700;letter-spacing:0.231px;">Metric</span>
<span class="t" style="left:264.30px;top:1138px;font-size:12px;line-height:16px;color:#808080;font-weight:700;letter-spacing:-0.279px;">Presentation Units:</span>
<span class="t" style="left:373.50px;top:1138px;font-size:12px;line-height:16px;color:#fff;font-weight:700;letter-spacing:0.231px;">Metric</span>
<span class="t" style="left:1794.20px;top:1138px;font-size:12px;line-height:16px;color:#F37021;letter-spacing:0.243px;">www.</span>
<span class="t" style="left:1824.50px;top:1138px;font-size:12px;line-height:16px;color:#fff;letter-spacing:-0.258px;">ideastatica</span>
<span class="t" style="left:1883.70px;top:1138px;font-size:12px;line-height:16px;color:#F37021;letter-spacing:-0.072px;">.com</span>
</div></body></html>
